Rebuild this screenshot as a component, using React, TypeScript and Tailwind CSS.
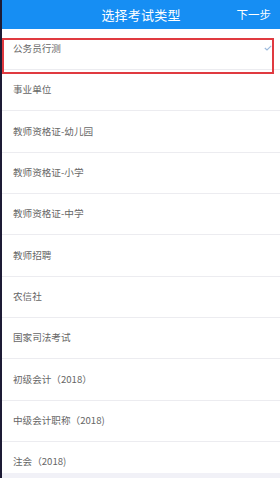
const ITEMS = [
  "公务员行测",
  "事业单位",
  "教师资格证-幼儿园",
  "教师资格证-小学",
  "教师资格证-中学",
  "教师招聘",
  "农信社",
  "国家司法考试",
  "初级会计（2018）",
  "中级会计职称（2018)",
  "注会（2018)",
];

export default function App() {
  return (
    <div
      className="relative flex h-[478px] w-[280px] overflow-hidden bg-white"
      style={{ fontFamily: '"Noto Sans CJK SC", "Noto Sans", sans-serif' }}
    >
      {/* dark edge of the previous screen */}
      <div className="w-[2px] shrink-0 bg-[#1d1b35]" />
      <div className="flex min-w-0 flex-1 flex-col">
        <header className="relative flex h-[28.7px] shrink-0 items-center justify-center bg-[#168ef3] text-white">
          <span className="text-[13px] leading-none tracking-[0.2px]">选择考试类型</span>
          <span className="absolute right-[9px] text-[11.5px] leading-none">下一步</span>
        </header>
        <ul className="flex-1 overflow-hidden">
          {ITEMS.map((name, i) => (
            <li
              key={name}
              className="relative flex h-[41.33px] items-center border-b border-[#ececf0] pb-[1px] pl-[11px] text-[9.6px] text-[#666]"
            >
              {name}
              {i === 0 && (
                <svg
                  className="absolute right-[8px] top-[16px]"
                  width="8"
                  height="6"
                  viewBox="0 0 8 6"
                  fill="none"
                >
                  <path d="M0.8 3 L3 5 L7.2 0.8" stroke="#9bb9dc" strokeWidth="1.1" />
                </svg>
              )}
            </li>
          ))}
        </ul>
        <div className="h-[5px] shrink-0 bg-[#f1f1f7]" />
      </div>
      {/* annotation box around the chosen item */}
      <div className="pointer-events-none absolute left-[2px] top-[38px] h-[36px] w-[272px] border-2 border-[#e03a40]" />
    </div>
  );
}
